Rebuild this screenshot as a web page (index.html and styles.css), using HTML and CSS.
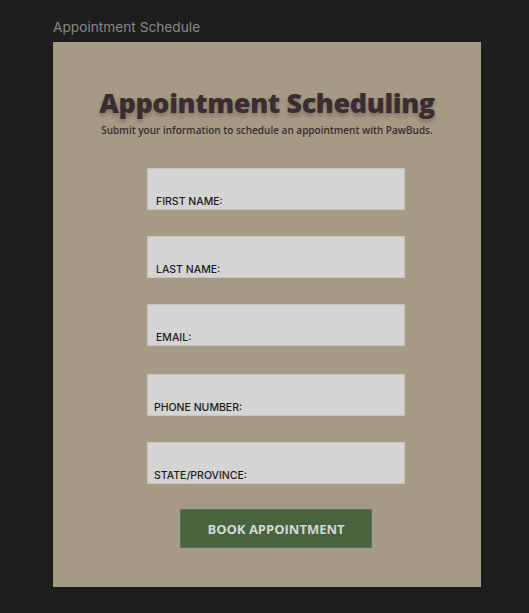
FILE: index.html
```html
<!DOCTYPE html>
<html>
<head>
<meta charset="utf-8">
<link rel="stylesheet" href="styles.css">
</head>
<body>
<div class="page">
  <div class="frame-label">Appointment Schedule</div>
  <div class="frame">
    <h1 class="title">Appointment Scheduling</h1>
    <p class="subtitle">Submit your information to schedule an appointment with PawBuds.</p>
    <form class="form">
      <div class="field"><span class="field-label">FIRST NAME:</span></div>
      <div class="field"><span class="field-label">LAST NAME:</span></div>
      <div class="field"><span class="field-label">EMAIL:</span></div>
      <div class="field field-wide"><span class="field-label">PHONE NUMBER:</span></div>
      <div class="field field-wide"><span class="field-label">STATE/PROVINCE:</span></div>
      <div class="btn">BOOK APPOINTMENT</div>
    </form>
  </div>
</div>
</body>
</html>
```
FILE: styles.css
```css
html, body {
  margin: 0;
  padding: 0;
  background: #1e1e1e;
}
.page {
  padding: 18px 0 0 53px;
}
.frame-label {
  font-family: Inter, "Liberation Sans", sans-serif;
  font-size: 13.7px;
  line-height: 18px;
  color: #8a8a8a;
  height: 24px;
}
.frame {
  width: 428px;
  height: 545px;
  background: #a59a84;
  box-sizing: border-box;
  padding-top: 44px;
  display: flex;
  flex-direction: column;
  align-items: center;
}
.title {
  margin: 0;
  font-family: "Open Sans", sans-serif;
  font-weight: 800;
  font-size: 27px;
  line-height: 33px;
  color: #3a2c30;
  text-shadow: 0 3px 4px rgba(0,0,0,0.25);
  letter-spacing: -0.4px;
}
.subtitle {
  margin: 4px 0 0 0;
  font-family: "Open Sans", sans-serif;
  font-weight: 600;
  font-size: 10px;
  line-height: 14px;
  color: #3a2c30;
}
.form {
  margin: 31px 0 0 18px;
  display: flex;
  flex-direction: column;
  align-items: center;
}
.field {
  width: 258px;
  height: 42px;
  box-sizing: border-box;
  background: #d4d4d4;
  border: 1px solid #c8c4bb;
  display: flex;
  align-items: flex-end;
  padding: 0 0 1px 8px;
  margin-bottom: 26px;
}
.field-wide {
  padding-left: 6px;
  margin-bottom: 26px;
}
.field:nth-child(3) { margin-bottom: 28px; }
.field-label {
  font-family: Inter, "Liberation Sans", sans-serif;
  font-weight: 500;
  font-size: 10.5px;
  line-height: 13px;
  color: #1a1a1a;
}
.btn {
  margin-top: -1px;
  width: 192px;
  height: 39px;
  background: #48643f;
  border: 1px solid #5a7051;
  box-sizing: border-box;
  display: flex;
  align-items: center;
  justify-content: center;
  font-family: "Open Sans", sans-serif;
  font-weight: 700;
  font-size: 13px;
  color: #d6d6d6;
}
```
